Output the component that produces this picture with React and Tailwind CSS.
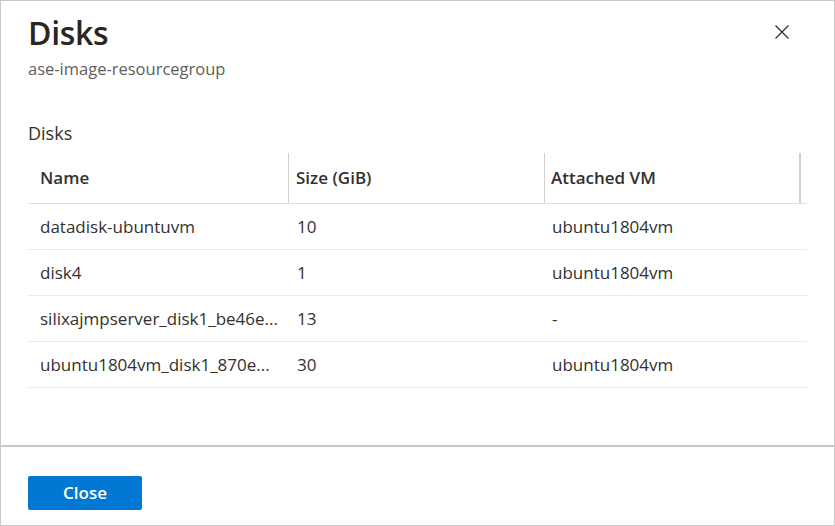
import React from "react";

const rows = [
  { name: "datadisk-ubuntuvm", size: "10", vm: "ubuntu1804vm" },
  { name: "disk4", size: "1", vm: "ubuntu1804vm" },
  { name: "silixajmpserver_disk1_be46e...", size: "13", vm: "-" },
  { name: "ubuntu1804vm_disk1_870e...", size: "30", vm: "ubuntu1804vm" },
];

const font = { fontFamily: '"Open Sans", "Noto Sans", Arial, sans-serif' };

const App = () => {
  return (
    <div
      className="w-[835px] h-[526px] bg-white border border-[#c8c8c8] flex flex-col text-[#323130]"
      style={font}
    >
      <div className="flex-1 pl-[27px] pr-[44px] pt-[11px]">
        <div className="flex items-start justify-between">
          <div>
            <h1 className="text-[32px] leading-[42px] font-semibold text-[#2b2622] tracking-[-0.3px]">Disks</h1>
            <p className="text-[16.5px] leading-[22px] text-[#605e5c] mt-[4px]">ase-image-resourcegroup</p>
          </div>
          <button className="mt-[12px] w-[16px] h-[16px] flex items-center justify-center text-[#323130]">
            <svg viewBox="0 0 16 16" className="w-[16px] h-[16px]" fill="none" stroke="currentColor" strokeWidth="1.3">
              <path d="M1.5 1.5 L14.5 14.5 M14.5 1.5 L1.5 14.5" />
            </svg>
          </button>
        </div>

        <div className="mt-[41px] text-[18px] leading-[24px]">Disks</div>

        <div className="mt-[8px] w-[779px] text-[17px]">
          <div className="grid grid-cols-[261px_256px_256px_1fr] h-[51px] border-b border-[#e1dfdd] font-semibold">
            <div className="pl-[12px] flex items-center border-r border-[#d2d0ce]">Name</div>
            <div className="pl-[7px] flex items-center border-r border-[#d2d0ce]">Size (GiB)</div>
            <div className="pl-[6px] flex items-center border-r-2 border-[#d2d0ce]">Attached VM</div>
            <div />
          </div>
          {rows.map((r) => (
            <div
              key={r.name}
              className="grid grid-cols-[261px_256px_256px_1fr] h-[46px] border-b border-[#edebe9] items-center"
            >
              <div className="pl-[12px] whitespace-nowrap">{r.name}</div>
              <div className="pl-[8px]">{r.size}</div>
              <div className="pl-[7px]">{r.vm}</div>
              <div />
            </div>
          ))}
        </div>
      </div>

      <div className="h-[80px] border-t-2 border-[#c8c8c8] pl-[27px] pt-[29px]">
        <button className="w-[114px] h-[34px] rounded-[2px] bg-[#0078d4] text-white text-[17px] font-semibold">
          Close
        </button>
      </div>
    </div>
  );
};

export default App;
